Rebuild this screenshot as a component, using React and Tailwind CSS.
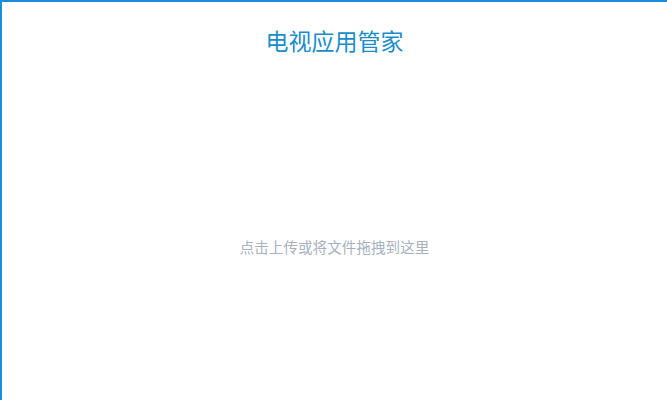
export default function App() {
  return (
    <div
      className="w-[667px] h-[400px] bg-white border-t-2 border-l-2 border-[#1a8ddb] flex flex-col items-center"
      style={{ fontFamily: '"Microsoft YaHei", "Noto Sans CJK SC", sans-serif' }}
    >
      <h1 className="mt-[23px] text-[23px] leading-[30px] text-[#1a8cc8] font-normal">电视应用管家</h1>
      <div className="mt-[182px] text-[14.6px] leading-[20px] text-[#a8b1bf]">点击上传或将文件拖拽到这里</div>
    </div>
  );
}
